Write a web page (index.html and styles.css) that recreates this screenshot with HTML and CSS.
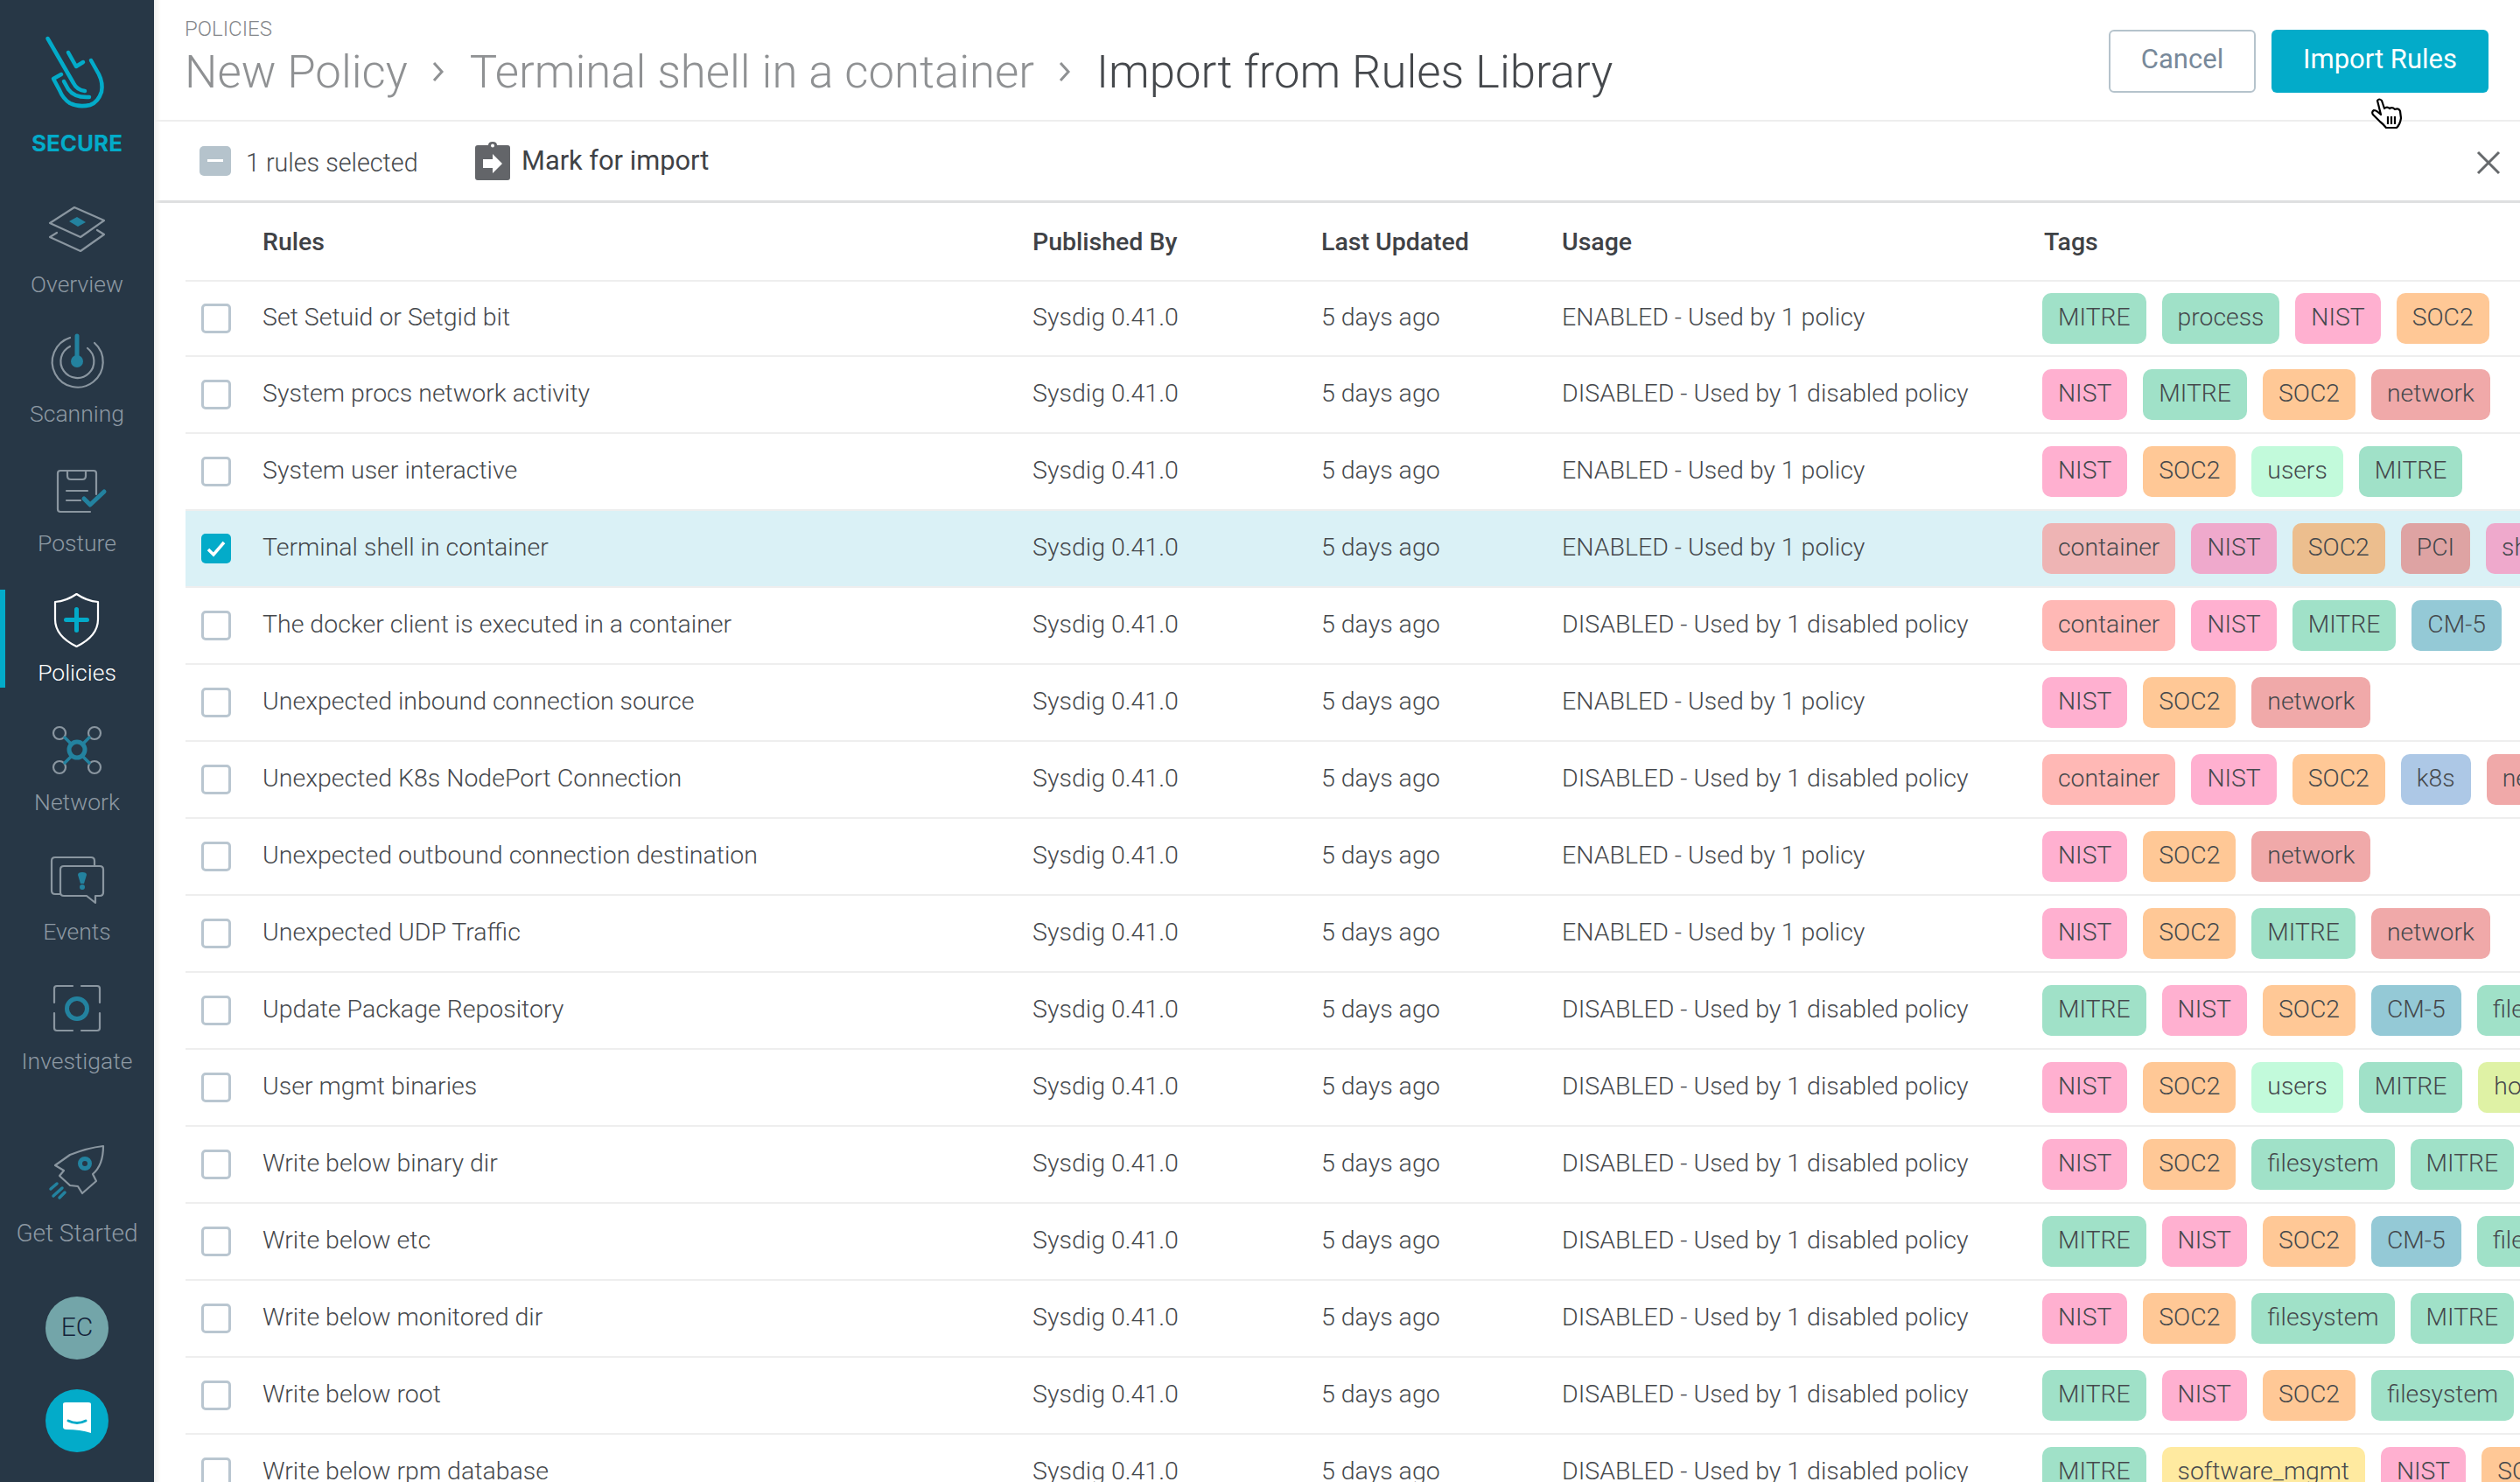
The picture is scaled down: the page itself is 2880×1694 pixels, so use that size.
FILE: index.html
```html
<!DOCTYPE html>
<html>
<head>
<meta charset="utf-8">
<title>Import from Rules Library</title>
<link rel="stylesheet" href="styles.css">
</head>
<body>
<div class="app">

<div class="side">
	<div class="brand">
		<svg class="logo" width="176" height="150" viewBox="0 0 176 150">
			<path d="M54.5 44 L84 95 Q88 103 97 104 M78 60 L87 76 L95 71 M104 69 L113 85 Q118 95 116 105 Q112 117 103 120 Q90 123 80 118 Q72 113 68 103 L61 90 L70 85 M73 93 L78 102 Q85 112 102 111"/>
		</svg>
		<div class="brand-name">SECURE</div>
	</div>

	<div class="nav">
		<div class="nav-item">
			<svg width="176" height="72" viewBox="0 230 176 72">
				<path class="ln" d="M57 271 L65 266 M111 263 L119 268 L92 287 L57 271"/>
				<path class="ln" d="M57 255 L85 237 L119 252 L92 271 Z"/>
				<path class="ac-fill" d="M79 253 L88 248 L98 254 L89 259 Z"/>
			</svg>
			<span>Overview</span>
		</div>
		<div class="nav-item">
			<svg width="176" height="72" viewBox="0 378 176 72">
				<path class="ln" d="M80 386 A29 29 0 1 0 108 392"/>
				<path class="ln" d="M80 396 A19 19 0 1 0 100 398"/>
				<path class="ac" d="M88 384 L88 413"/>
				<circle class="ac-fill" cx="88" cy="413" r="7"/>
			</svg>
			<span>Scanning</span>
		</div>
		<div class="nav-item">
			<svg width="176" height="72" viewBox="0 526 176 72">
				<path class="ln" d="M103 585 H69 Q66 585 66 582 V541 Q66 538 69 538 H107 Q110 538 110 541 V565"/>
				<path class="ln" d="M77 538 V544 Q77 548 81 548 H94 Q98 548 98 544 V538 M76 561 H100 M76 572 H92"/>
				<path class="ac" d="M96 570 L103 577 L119 562"/>
			</svg>
			<span>Posture</span>
		</div>
		<div class="nav-item on">
			<svg width="176" height="72" viewBox="0 674 176 72">
				<path class="ln" d="M87.5 679 Q76 687 63 688 V708 Q63 727 87.5 739 Q112 727 112 708 V688 Q99 687 87.5 679 Z"/>
				<path class="ac" d="M75.5 708.5 H99.5 M87.5 696.5 V720.5"/>
			</svg>
			<span>Policies</span>
		</div>
		<div class="nav-item">
			<svg width="176" height="72" viewBox="0 822 176 72">
				<circle class="ln" cx="68" cy="838" r="7"/>
				<circle class="ln" cx="108" cy="838" r="7"/>
				<circle class="ln" cx="68" cy="877" r="7"/>
				<circle class="ln" cx="108" cy="877" r="7"/>
				<path class="ac thin" d="M74 843 L81 850 M102 843 L95 850 M74 872 L81 865 M102 872 L95 865"/>
				<circle class="ac" cx="88" cy="857" r="9"/>
			</svg>
			<span>Network</span>
		</div>
		<div class="nav-item">
			<svg width="176" height="72" viewBox="0 970 176 72">
				<path class="ln" d="M69 1022 H63 Q59 1022 59 1018 V984 Q59 980 63 980 H104 Q108 980 108 984 V990"/>
				<path class="ln" d="M73 990 H114 Q118 990 118 994 V1020 Q118 1024 114 1024 H109 V1032 L99 1024 H73 Q69 1024 69 1020 V994 Q69 990 73 990 Z"/>
				<path class="ac-fill" d="M89 1000 Q89 997 94 997 Q99 997 99 1000 L96 1010 H92 Z"/>
				<circle class="ac-fill" cx="94" cy="1014" r="3"/>
			</svg>
			<span>Events</span>
		</div>
		<div class="nav-item">
			<svg width="176" height="72" viewBox="0 1118 176 72">
				<path class="ln" d="M62 1146 V1130 Q62 1127 65 1127 H83 M93 1127 H111 Q114 1127 114 1130 V1146 M114 1158 V1175 Q114 1178 111 1178 H93 M83 1178 H65 Q62 1178 62 1175 V1158"/>
				<circle class="ac" cx="88" cy="1153" r="11.5"/>
			</svg>
			<span>Investigate</span>
		</div>
	</div>

	<div class="nav-item start">
		<svg width="176" height="72" viewBox="0 1300 176 72">
			<path class="ln" d="M118 1308 Q100 1310 80 1318 L63 1330 L73 1336 L68 1342 L80 1353 L89 1354 L94 1362 L110 1348 L106 1340 Q118 1330 118 1308 Z"/>
			<circle class="ac" cx="97" cy="1328" r="5.5"/>
			<path class="ac thin" d="M58 1357 L65 1351 M61 1365 L71 1356 M68 1367 L74 1361"/>
		</svg>
		<span>Get Started</span>
	</div>

	<div class="avatar">EC</div>
	<div class="chat">
		<svg width="72" height="72" viewBox="0 0 72 72">
			<path class="chat-box" d="M20 17 Q20 15 23 15 H49 Q52 15 52 17 V50 Q40 46 24 46 Q20 46 20 43 Z"/>
			<path class="chat-smile" d="M26 36 Q36 41 46 36"/>
		</svg>
	</div>
</div>

<div class="main">
	<div class="head">
		<div class="crumbs">
			<div class="over">POLICIES</div>
			<div class="title">
				<span>New Policy</span>
				<svg class="chev" width="16" height="26" viewBox="0 0 16 26"><path d="M3 3 L12 13 L3 23"/></svg>
				<span>Terminal shell in a container</span>
				<svg class="chev" width="16" height="26" viewBox="0 0 16 26"><path d="M3 3 L12 13 L3 23"/></svg>
				<span class="now">Import from Rules Library</span>
			</div>
		</div>
		<div class="btn cancel">Cancel</div>
		<div class="btn primary">Import Rules</div>
	</div>

	<div class="bar">
		<div class="box minus"></div>
		<div class="count">1 rules selected</div>
		<svg class="mark-ic" width="40" height="44" viewBox="0 0 40 44">
			<path class="mark-body" d="M3 4 H15 Q15 0 20 0 Q25 0 25 4 H37 Q40 4 40 7 V41 Q40 44 37 44 H3 Q0 44 0 41 V7 Q0 4 3 4 Z"/>
			<circle class="mark-hole" cx="20" cy="4.5" r="2"/>
			<path class="mark-arrow" d="M9 20 H20 V14 L31 25 L20 36 V30 H9 Z"/>
		</svg>
		<div class="mark">Mark for import</div>
		<svg class="close" width="28" height="28" viewBox="0 0 28 28"><path d="M2 2 L26 26 M26 2 L2 26"/></svg>
	</div>

	<div class="row th">
		<div class="c-check"></div>
		<div class="c-name">Rules</div>
		<div class="c-pub">Published By</div>
		<div class="c-upd">Last Updated</div>
		<div class="c-use">Usage</div>
		<div class="c-tags tags-head">Tags</div>
	</div>

	<div class="row">
		<div class="c-check"><div class="box"></div></div>
		<div class="c-name">Set Setuid or Setgid bit</div>
		<div class="c-pub">Sysdig 0.41.0</div>
		<div class="c-upd">5 days ago</div>
		<div class="c-use">ENABLED - Used by 1 policy</div>
		<div class="c-tags"><span class="tag mitre">MITRE</span><span class="tag mitre">process</span><span class="tag nist">NIST</span><span class="tag soc">SOC2</span></div>
	</div>
	<div class="row">
		<div class="c-check"><div class="box"></div></div>
		<div class="c-name">System procs network activity</div>
		<div class="c-pub">Sysdig 0.41.0</div>
		<div class="c-upd">5 days ago</div>
		<div class="c-use">DISABLED - Used by 1 disabled policy</div>
		<div class="c-tags"><span class="tag nist">NIST</span><span class="tag mitre">MITRE</span><span class="tag soc">SOC2</span><span class="tag net">network</span></div>
	</div>
	<div class="row">
		<div class="c-check"><div class="box"></div></div>
		<div class="c-name">System user interactive</div>
		<div class="c-pub">Sysdig 0.41.0</div>
		<div class="c-upd">5 days ago</div>
		<div class="c-use">ENABLED - Used by 1 policy</div>
		<div class="c-tags"><span class="tag nist">NIST</span><span class="tag soc">SOC2</span><span class="tag users">users</span><span class="tag mitre">MITRE</span></div>
	</div>
	<div class="row sel">
		<div class="c-check"><div class="box checked"><svg width="34" height="34" viewBox="0 0 34 34"><path d="M8 18 L14 24 L26 10"/></svg></div></div>
		<div class="c-name">Terminal shell in container</div>
		<div class="c-pub">Sysdig 0.41.0</div>
		<div class="c-upd">5 days ago</div>
		<div class="c-use">ENABLED - Used by 1 policy</div>
		<div class="c-tags"><span class="tag cont">container</span><span class="tag nist">NIST</span><span class="tag soc">SOC2</span><span class="tag pci">PCI</span><span class="tag nist">shell</span></div>
	</div>
	<div class="row">
		<div class="c-check"><div class="box"></div></div>
		<div class="c-name">The docker client is executed in a container</div>
		<div class="c-pub">Sysdig 0.41.0</div>
		<div class="c-upd">5 days ago</div>
		<div class="c-use">DISABLED - Used by 1 disabled policy</div>
		<div class="c-tags"><span class="tag cont">container</span><span class="tag nist">NIST</span><span class="tag mitre">MITRE</span><span class="tag cm">CM-5</span></div>
	</div>
	<div class="row">
		<div class="c-check"><div class="box"></div></div>
		<div class="c-name">Unexpected inbound connection source</div>
		<div class="c-pub">Sysdig 0.41.0</div>
		<div class="c-upd">5 days ago</div>
		<div class="c-use">ENABLED - Used by 1 policy</div>
		<div class="c-tags"><span class="tag nist">NIST</span><span class="tag soc">SOC2</span><span class="tag net">network</span></div>
	</div>
	<div class="row">
		<div class="c-check"><div class="box"></div></div>
		<div class="c-name">Unexpected K8s NodePort Connection</div>
		<div class="c-pub">Sysdig 0.41.0</div>
		<div class="c-upd">5 days ago</div>
		<div class="c-use">DISABLED - Used by 1 disabled policy</div>
		<div class="c-tags"><span class="tag cont">container</span><span class="tag nist">NIST</span><span class="tag soc">SOC2</span><span class="tag k8s">k8s</span><span class="tag net">network</span></div>
	</div>
	<div class="row">
		<div class="c-check"><div class="box"></div></div>
		<div class="c-name">Unexpected outbound connection destination</div>
		<div class="c-pub">Sysdig 0.41.0</div>
		<div class="c-upd">5 days ago</div>
		<div class="c-use">ENABLED - Used by 1 policy</div>
		<div class="c-tags"><span class="tag nist">NIST</span><span class="tag soc">SOC2</span><span class="tag net">network</span></div>
	</div>
	<div class="row">
		<div class="c-check"><div class="box"></div></div>
		<div class="c-name">Unexpected UDP Traffic</div>
		<div class="c-pub">Sysdig 0.41.0</div>
		<div class="c-upd">5 days ago</div>
		<div class="c-use">ENABLED - Used by 1 policy</div>
		<div class="c-tags"><span class="tag nist">NIST</span><span class="tag soc">SOC2</span><span class="tag mitre">MITRE</span><span class="tag net">network</span></div>
	</div>
	<div class="row">
		<div class="c-check"><div class="box"></div></div>
		<div class="c-name">Update Package Repository</div>
		<div class="c-pub">Sysdig 0.41.0</div>
		<div class="c-upd">5 days ago</div>
		<div class="c-use">DISABLED - Used by 1 disabled policy</div>
		<div class="c-tags"><span class="tag mitre">MITRE</span><span class="tag nist">NIST</span><span class="tag soc">SOC2</span><span class="tag cm">CM-5</span><span class="tag mitre">filesystem</span></div>
	</div>
	<div class="row">
		<div class="c-check"><div class="box"></div></div>
		<div class="c-name">User mgmt binaries</div>
		<div class="c-pub">Sysdig 0.41.0</div>
		<div class="c-upd">5 days ago</div>
		<div class="c-use">DISABLED - Used by 1 disabled policy</div>
		<div class="c-tags"><span class="tag nist">NIST</span><span class="tag soc">SOC2</span><span class="tag users">users</span><span class="tag mitre">MITRE</span><span class="tag hosts">hosts</span></div>
	</div>
	<div class="row">
		<div class="c-check"><div class="box"></div></div>
		<div class="c-name">Write below binary dir</div>
		<div class="c-pub">Sysdig 0.41.0</div>
		<div class="c-upd">5 days ago</div>
		<div class="c-use">DISABLED - Used by 1 disabled policy</div>
		<div class="c-tags"><span class="tag nist">NIST</span><span class="tag soc">SOC2</span><span class="tag mitre">filesystem</span><span class="tag mitre">MITRE</span></div>
	</div>
	<div class="row">
		<div class="c-check"><div class="box"></div></div>
		<div class="c-name">Write below etc</div>
		<div class="c-pub">Sysdig 0.41.0</div>
		<div class="c-upd">5 days ago</div>
		<div class="c-use">DISABLED - Used by 1 disabled policy</div>
		<div class="c-tags"><span class="tag mitre">MITRE</span><span class="tag nist">NIST</span><span class="tag soc">SOC2</span><span class="tag cm">CM-5</span><span class="tag mitre">filesystem</span></div>
	</div>
	<div class="row">
		<div class="c-check"><div class="box"></div></div>
		<div class="c-name">Write below monitored dir</div>
		<div class="c-pub">Sysdig 0.41.0</div>
		<div class="c-upd">5 days ago</div>
		<div class="c-use">DISABLED - Used by 1 disabled policy</div>
		<div class="c-tags"><span class="tag nist">NIST</span><span class="tag soc">SOC2</span><span class="tag mitre">filesystem</span><span class="tag mitre">MITRE</span></div>
	</div>
	<div class="row">
		<div class="c-check"><div class="box"></div></div>
		<div class="c-name">Write below root</div>
		<div class="c-pub">Sysdig 0.41.0</div>
		<div class="c-upd">5 days ago</div>
		<div class="c-use">DISABLED - Used by 1 disabled policy</div>
		<div class="c-tags"><span class="tag mitre">MITRE</span><span class="tag nist">NIST</span><span class="tag soc">SOC2</span><span class="tag mitre">filesystem</span></div>
	</div>
	<div class="row">
		<div class="c-check"><div class="box"></div></div>
		<div class="c-name">Write below rpm database</div>
		<div class="c-pub">Sysdig 0.41.0</div>
		<div class="c-upd">5 days ago</div>
		<div class="c-use">DISABLED - Used by 1 disabled policy</div>
		<div class="c-tags"><span class="tag mitre">MITRE</span><span class="tag soft">software_mgmt</span><span class="tag nist">NIST</span><span class="tag soc">SOC2</span></div>
	</div>
</div>

<!-- mouse pointer, lies over the page -->
<svg class="cursor" width="36" height="37" viewBox="0 0 36 37">
	<path d="M7 3 Q9 0 12 3 L15 12 Q18 9 21 12 Q24 10 27 13 Q31 11 33 15 L34 23 Q33 30 29 34 H17 Q14 30 10 27 L2 19 Q0 16 3 14 Q6 14 11 19 Z"/>
	<path d="M19 21 V30 M23 21 V30 M27 21 V30"/>
</svg>

</div>
</body>
</html>
```

FILE: styles.css
```css
html, body {
	margin: 0;
	height: 100%;
	overflow: hidden;
}
body {
	font-family: Roboto, "Liberation Sans", sans-serif;
	font-weight: 300;
	color: #45484c;
	background: #fff;
}
.app {
	display: flex;
	position: relative;
	width: 2880px;
	height: 1694px;
	overflow: hidden;
}

/* left bar */
.side {
	flex: 0 0 176px;
	height: 1694px;
	background: #273746;
	display: flex;
	flex-direction: column;
	align-items: center;
	color: #8d99a3;
}
.brand {
	height: 230px;
	flex: none;
	width: 176px;
	display: flex;
	flex-direction: column;
	align-items: center;
}
.logo {
	display: block;
}
.logo path {
	fill: none;
	stroke: #03abc9;
	stroke-width: 4.5;
	stroke-linecap: round;
	stroke-linejoin: round;
}
.brand-name {
	font-family: Inter, Roboto, sans-serif;
	font-size: 26px;
	font-weight: 700;
	line-height: 28px;
	color: #03abc9;
}
.nav-item {
	position: relative;
	width: 176px;
	height: 112px;
	margin-bottom: 36px;
	display: flex;
	flex-direction: column;
	align-items: center;
	font-size: 26.5px;
	line-height: 40px;
	flex: none;
}
.nav-item svg {
	display: block;
	flex: none;
}
.nav-item span {
	margin-top: 3px;
}
.nav-item.on {
	color: #fff;
}
.nav-item.on::before {
	content: "";
	position: absolute;
	left: 0;
	top: 0;
	width: 6px;
	height: 112px;
	background: #03abc9;
}
.nav-item.on .ln {
	stroke: #fff;
}
.nav-item.on .ac {
	stroke: #03abc9;
}
.ln {
	fill: none;
	stroke: #8a96a0;
	stroke-width: 2.2;
	stroke-linecap: round;
	stroke-linejoin: round;
}
.ac {
	fill: none;
	stroke: #23829f;
	stroke-width: 5;
	stroke-linecap: round;
	stroke-linejoin: round;
}
.ac.thin {
	stroke-width: 3.5;
}
.ac-fill {
	fill: #23829f;
}
.start {
	height: 130px;
	margin-top: 36px;
	margin-bottom: 0;
	font-size: 28px;
}
.start span {
	margin-top: 16px;
}
.avatar {
	flex: none;
	width: 72px;
	height: 72px;
	margin-top: 50px;
	border-radius: 50%;
	background: #73a5a9;
	color: #14233a;
	font-size: 30px;
	font-weight: 300;
	line-height: 70px;
	text-align: center;
}
.chat {
	flex: none;
	width: 72px;
	height: 72px;
	margin-top: 34px;
	border-radius: 50%;
	background: #03abc9;
}
.chat svg {
	display: block;
}
.chat-box {
	fill: #fff;
}
.chat-smile {
	fill: none;
	stroke: #03abc9;
	stroke-width: 3;
	stroke-linecap: round;
}

/* content */
.main {
	flex: 1;
	min-width: 0;
	position: relative;
}
.main::before {
	content: "";
	position: absolute;
	left: 0;
	top: 0;
	bottom: 0;
	width: 8px;
	background: linear-gradient(to right, #efefef, rgba(255, 255, 255, 0));
	z-index: 2;
}
.head {
	height: 137px;
	border-bottom: 2px solid #eeeeee;
	display: flex;
	align-items: flex-start;
	padding: 0 36px 0 35px;
}
.crumbs {
	flex: 1;
	padding-top: 20px;
}
.over {
	font-size: 24px;
	line-height: 27px;
	color: #85888b;
}
.title {
	display: flex;
	align-items: center;
	font-size: 52.7px;
	line-height: 66px;
	margin-top: 2px;
	color: #8f9193;
}
.title .now {
	color: #45484c;
}
.chev {
	margin: 0 27.5px;
}
.chev path {
	fill: none;
	stroke: #8f9193;
	stroke-width: 3;
}
.btn {
	margin-top: 34px;
	height: 72px;
	box-sizing: border-box;
	border-radius: 6px;
	font-size: 31px;
	font-weight: 400;
	line-height: 64px;
	text-align: center;
}
.cancel {
	width: 168px;
	margin-right: 18px;
	border: 2px solid #b5c3cc;
	color: #78899a;
}
.primary {
	width: 248px;
	line-height: 68px;
	background: #03abc9;
	color: #fff;
}
.bar {
	height: 90px;
	border-bottom: 3px solid #dedfe0;
	box-sizing: content-box;
	display: flex;
	align-items: center;
	padding-left: 52px;
	position: relative;
}
.box {
	box-sizing: border-box;
	width: 34px;
	height: 34px;
	border: 3px solid #b9c6d0;
	border-radius: 5px;
	flex: none;
	background: #fff;
}
.box.minus {
	width: 36px;
	background: #b5c3cc;
	border: 0;
	position: relative;
}
.box.minus::after {
	content: "";
	position: absolute;
	left: 9px;
	right: 9px;
	top: 15px;
	height: 3px;
	background: #fff;
}
.box.checked {
	background: #03abc9;
	border: 0;
}
.box.checked svg {
	display: block;
}
.box.checked path {
	fill: none;
	stroke: #fff;
	stroke-width: 3.5;
}
.count {
	margin-left: 17px;
	margin-top: 3px;
	font-size: 28.7px;
	width: 262px;
}
.mark-ic {
	margin-right: 13px;
	flex: none;
}
.mark {
	font-size: 30.8px;
	font-weight: 400;
	color: #3f4246;
	margin-top: -2px;
}
.mark-body {
	fill: #636569;
}
.mark-hole {
	fill: #fff;
}
.mark-arrow {
	fill: #fff;
}
.close {
	position: absolute;
	right: 22px;
	top: 33px;
}
.close path {
	fill: none;
	stroke: #66696c;
	stroke-width: 3;
}

/* table */
.row {
	height: 88px;
	box-sizing: border-box;
	border-bottom: 2px solid #eeeeee;
	display: flex;
	align-items: center;
	font-size: 28.5px;
	margin-left: 36px;
	white-space: nowrap;
}
.c-name, .c-pub, .c-upd, .c-use {
	padding-bottom: 3px;
}
.row.th {
	height: 90px;
	font-weight: 500;
	color: #3f4246;
}
.th > div {
	padding-bottom: 0;
}
.th + .row {
	height: 86px;
}
.row.sel {
	background: #daf1f6;
}
.c-check {
	flex: 0 0 88px;
	padding-left: 18px;
	box-sizing: border-box;
}
.c-name {
	flex: 0 0 880px;
}
.c-pub {
	flex: 0 0 330px;
}
.c-upd {
	flex: 0 0 275px;
}
.c-use {
	flex: 0 0 549px;
}
.c-tags {
	flex: 1;
	min-width: 0;
	display: flex;
	gap: 18px;
	overflow: hidden;
}
.tags-head {
	padding-left: 2px;
}
.tag {
	flex: none;
	height: 58px;
	line-height: 55px;
	font-size: 28.3px;
	padding: 0 18px;
	border-radius: 10px;
	color: #45484c;
}
.mitre { background: #a0e1c8; }
.nist { background: #ffb0d0; }
.soc { background: #ffc896; }
.net { background: #f0a9a9; }
.users { background: #c2fadb; }
.cont { background: #ffb8b5; }
.cm { background: #94c9d6; }
.k8s { background: #adc8e6; }
.hosts { background: #dff2a5; }
.soft { background: #ffeaa0; }
.sel .cont { background: #eeb4b4; }
.sel .nist { background: #efa9cc; }
.sel .soc { background: #ecbe8e; }
.sel .pci { background: #dea3a3; }

.cursor {
	position: absolute;
	left: 2710px;
	top: 112px;
	z-index: 3;
}
.cursor path {
	fill: #fff;
	stroke: #000;
	stroke-width: 2.2;
	stroke-linejoin: round;
}
```
